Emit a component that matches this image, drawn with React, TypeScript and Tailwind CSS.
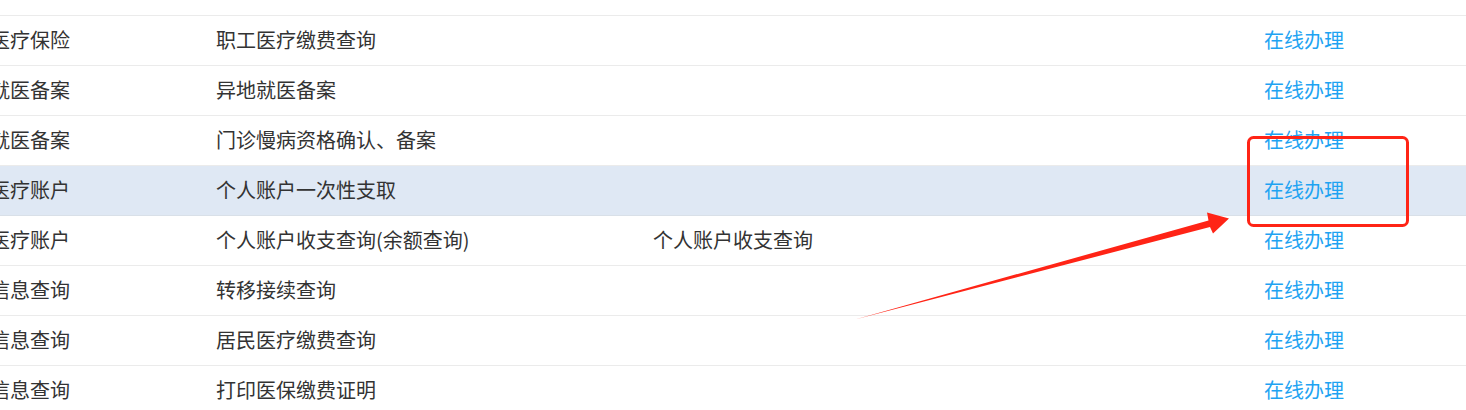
import React from 'react';

const rows = [
  { cat: '医疗保险', item: '职工医疗缴费查询', note: '' },
  { cat: '就医备案', item: '异地就医备案', note: '' },
  { cat: '就医备案', item: '门诊慢病资格确认、备案', note: '' },
  { cat: '医疗账户', item: '个人账户一次性支取', note: '', active: true },
  { cat: '医疗账户', item: '个人账户收支查询(余额查询)', note: '个人账户收支查询' },
  { cat: '信息查询', item: '转移接续查询', note: '' },
  { cat: '信息查询', item: '居民医疗缴费查询', note: '' },
  { cat: '信息查询', item: '打印医保缴费证明', note: '' },
];

export default function App() {
  return (
    <div
      className="relative w-[1466px] h-[410px] overflow-hidden bg-white text-[20px] text-[#333]"
      style={{ fontFamily: '"Microsoft YaHei", "Noto Sans CJK SC", "Noto Sans", sans-serif' }}
    >
      <div className="h-[16px] border-b border-[#ebebeb]" />
      {rows.map((r, i) => (
        <div
          key={i}
          className={
            'grid grid-cols-[226px_437px_611px_1fr] h-[50px] pb-[2px] items-center -ml-[10px] border-b ' +
            (r.active ? 'bg-[#dfe8f4] border-[#d9e0e8]' : 'border-[#ebebeb]')
          }
        >
          <span className="whitespace-nowrap">{r.cat}</span>
          <span className="whitespace-nowrap">{r.item}</span>
          <span className="whitespace-nowrap">{r.note}</span>
          <a className="whitespace-nowrap text-[#1ea3f2] cursor-pointer">在线办理</a>
        </div>
      ))}

      {/* annotation overlay */}
      <svg className="absolute left-0 top-0 pointer-events-none" width="1466" height="410">
        <rect x="1248.5" y="137.5" width="159" height="88" rx="5" fill="none" stroke="#ff2416" strokeWidth="3" />
        <polygon
          points="855,319.5 1210,227 1213,233.5 1229,218.5 1207,212.5 1208.5,220.5"
          fill="#ff2416"
        />
      </svg>
    </div>
  );
}
